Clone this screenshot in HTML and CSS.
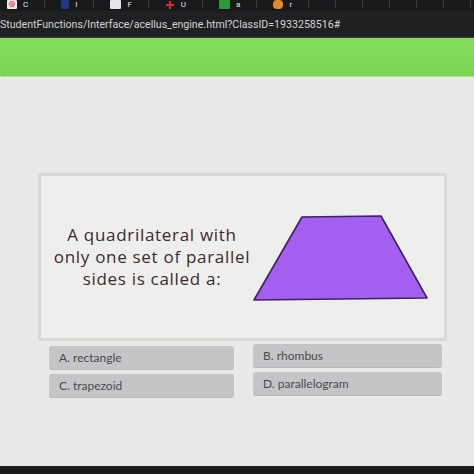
FILE: index.html
```
<!DOCTYPE html>
<html>
<head>
<meta charset="utf-8">
<link rel="stylesheet" href="styles.css">
</head>
<body>
<div class="screen">
  <div class="bookmarks">
    <span class="bm bm-red">@</span><span class="bm-txt">C</span><span class="sep"></span>
    <span class="bm bm-blue"></span><span class="bm-txt">I</span><span class="sep"></span>
    <span class="bm bm-white"></span><span class="bm-txt">F</span><span class="sep"></span>
    <span class="bm bm-plus"></span><span class="bm-txt">U</span><span class="sep"></span>
    <span class="bm bm-green"></span><span class="bm-txt">a</span><span class="sep"></span>
    <span class="bm bm-orange"></span><span class="bm-txt">r</span>
    <span class="sep"></span><span class="sep"></span><span class="sep"></span><span class="sep"></span><span class="sep"></span><span class="sep"></span><span class="sep"></span>
  </div>
  <div class="urlbar">StudentFunctions/Interface/acellus_engine.html?ClassID=1933258516#</div>
  <div class="greenbar"></div>
  <div class="page">
    <div class="card">
      <div class="question">A quadrilateral with<br>only one set of parallel<br>sides is called a:</div>
      <svg class="shape" width="176" height="88" viewBox="0 0 176 88">
        <polygon points="50,4 129,3 175,85 2,87" fill="#a45ff0" stroke="#3d2160" stroke-width="1.6" stroke-linejoin="round"/>
      </svg>
    </div>
    <div class="answers">
      <div class="answer">A. rectangle</div>
      <div class="answer up">B. rhombus</div>
      <div class="answer">C. trapezoid</div>
      <div class="answer up">D. parallelogram</div>
    </div>
  </div>
  <div class="bottombar"></div>
</div>
</body>
</html>
```
FILE: styles.css
```
html, body {
  margin: 0;
  padding: 0;
  background: #e8e8e6;
}
.screen {
  width: 474px;
  height: 474px;
  overflow: hidden;
  display: flex;
  flex-direction: column;
}
.bookmarks {
  height: 11px;
  background: #18191b;
  display: flex;
  align-items: flex-start;
  padding-left: 7px;
  gap: 6px;
  overflow: hidden;
}
.bm {
  width: 10px;
  height: 9px;
  flex: none;
  font: bold 7px/9px "DejaVu Sans", sans-serif;
  text-align: center;
  border-radius: 1px;
}
.bm-red { background: #f1e9e9; color: #d23b3b; }
.bm-blue { background: #1d3a8a; width: 8px; }
.bm-white { background: #e6e6ea; width: 11px; }
.bm-plus {
  background:
    linear-gradient(#e02828, #e02828) center / 2px 8px no-repeat,
    linear-gradient(#e02828, #e02828) center / 8px 2px no-repeat;
}
.bm-green { background: #2c9a3b; width: 11px; }
.bm-orange { background: #e58a2e; border-radius: 4px; }
.bm-txt {
  flex: none;
  color: #e8e8e8;
  font: 8px/10px "Roboto", sans-serif;
}
.sep {
  flex: none;
  width: 1px;
  height: 8px;
  background: #3a3b3e;
  margin: 0 10px;
}
.urlbar {
  height: 26px;
  background: #1f2022;
  border-bottom: 1px solid #3b3c3a;
  color: #d6d6d6;
  font: 10.6px/28px "Roboto", sans-serif;
  white-space: nowrap;
  overflow: hidden;
}
.greenbar {
  height: 38px;
  background: linear-gradient(#86dc5d, #7bd354);
  border-bottom: 1px dotted #c8e8b8;
}
.page {
  flex: 1;
  padding: 96px 0 0 38px;
  background: #e9e9e7;
}
.card {
  width: 403px;
  height: 162px;
  border: 3px solid #d8d8d6;
  background: #eeeeec;
  display: flex;
  align-items: center;
}
.question {
  width: 211px;
  box-sizing: border-box;
  padding-left: 11px;
  text-align: center;
  white-space: nowrap;
  font: 17px/22px "Open Sans", sans-serif;
  color: #3c2a2c;
  letter-spacing: 0.7px;
}
.shape {
  display: block;
  flex: none;
}
.answers {
  display: grid;
  grid-template-columns: 185px 189px;
  column-gap: 19px;
  row-gap: 5px;
  margin: 5px 0 0 11px;
}
.answer {
  height: 23px;
  background: #c5c5c7;
  border-radius: 3px;
  box-shadow: 0 1px 0 #b8b8ba;
  padding-left: 10px;
  font: 12px/24px "Lato", sans-serif;
  color: #4a4a4c;
}
.answer.up {
  position: relative;
  top: -2px;
}
.bottombar {
  height: 8px;
  background: #1c1c1c;
}
```
